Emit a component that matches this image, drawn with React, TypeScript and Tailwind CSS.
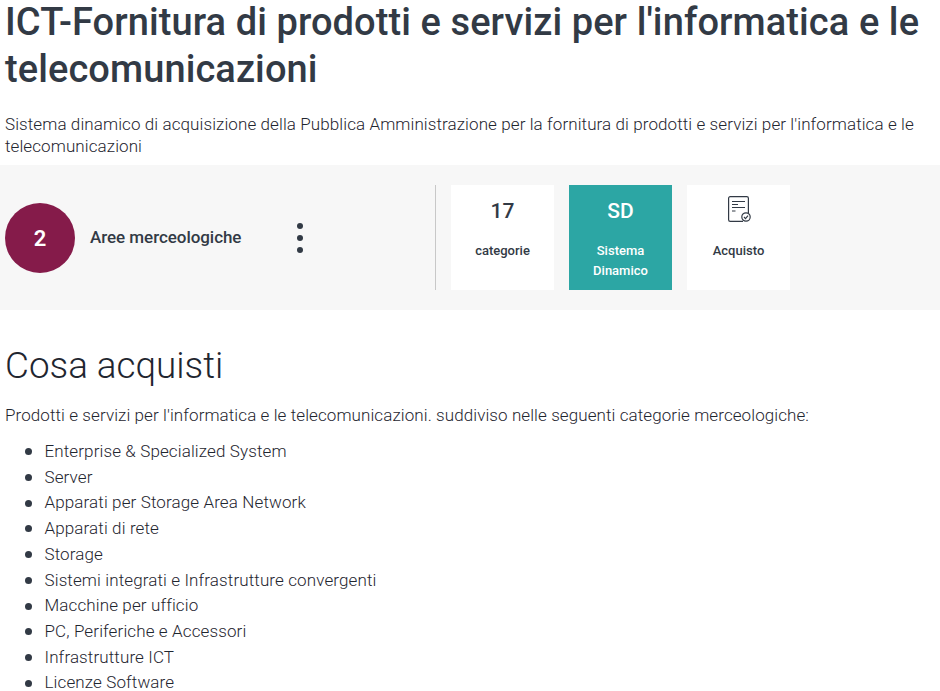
const items = [
  "Enterprise & Specialized System",
  "Server",
  "Apparati per Storage Area Network",
  "Apparati di rete",
  "Storage",
  "Sistemi integrati e Infrastrutture convergenti",
  "Macchine per ufficio",
  "PC, Periferiche e Accessori",
  "Infrastrutture ICT",
  "Licenze Software",
];

function Card({ top, label, active }: { top: React.ReactNode; label: React.ReactNode; active?: boolean }) {
  return (
    <div className={`flex h-[105px] w-[103px] flex-col items-center text-center ${active ? "bg-[#2ca6a4] text-white" : "bg-white text-[#323a45]"}`}>
      <div className="flex h-[52px] items-center justify-center pt-[2px] text-[21px] font-medium">{top}</div>
      <div className="mt-[4px] text-[13px] leading-[20px] font-medium">{label}</div>
    </div>
  );
}

export default function App() {
  return (
    <div className="h-[691px] w-[940px] overflow-hidden bg-white text-[#323a45] font-['Roboto',sans-serif]">
      <h1 className="-mt-[1px] pl-[5px] text-[38px] leading-[47px] font-medium tracking-[0.09px]">
        ICT-Fornitura di prodotti e servizi per l'informatica e le telecomunicazioni
      </h1>
      <p className="mt-[20px] pl-[5px] pr-[20px] text-[17px] leading-[22px] font-light tracking-[0.095px] text-[#1f2630]">
        Sistema dinamico di acquisizione della Pubblica Amministrazione per la fornitura di prodotti e servizi per l'informatica e le telecomunicazioni
      </p>
      <div className="mt-[8px] flex h-[145px] items-center bg-[#f7f7f7] pl-[5px]">
        <div className="flex h-[70px] w-[70px] items-center justify-center rounded-full bg-[#851b4a] pt-[2px] text-[22px] font-semibold text-white">2</div>
        <div className="ml-[15px] w-[207px] pt-[1px] text-[17px] font-medium tracking-[-0.05px]">Aree merceologiche</div>
        <div className="flex flex-col gap-[6px]">
          <span className="h-[6px] w-[6px] rounded-full bg-[#323a45]" />
          <span className="h-[6px] w-[6px] rounded-full bg-[#323a45]" />
          <span className="h-[6px] w-[6px] rounded-full bg-[#323a45]" />
        </div>
        <div className="ml-[132px] flex h-[105px] gap-[15px] border-l border-[#c8c8c8] pl-[15px]">
          <Card top="17" label="categorie" />
          <Card top="SD" label={<>Sistema<br />Dinamico</>} active />
          <Card
            top={
              <svg width="24" height="27" viewBox="0 0 24 27" fill="none" stroke="#323a45" strokeWidth="1.2" className="-mt-[5px]">
                <path d="M16 25.400H3.200A1.600 1.600 0 0 1 1.600 23.800V2.200A1.600 1.600 0 0 1 3.200 0.600H19.800A1.600 1.600 0 0 1 21.400 2.200V17" />
                <path d="M5 5.500H18M5 8.500H11M5 11.500H18M5 15H8.500" />
                <circle cx="19" cy="21" r="4.200" />
                <path d="M17 21L18.500 22.600L21 19.600" />
              </svg>
            }
            label="Acquisto"
          />
        </div>
      </div>
      <h2 className="mt-[32px] pl-[5px] text-[36.8px] leading-[48px] font-light text-[#1f2630]">Cosa acquisti</h2>
      <p className="mt-[12px] pl-[5px] text-[17px] leading-[26px] font-light tracking-[0.09px] text-[#1f2630]">
        Prodotti e servizi per l'informatica e le telecomunicazioni. suddiviso nelle seguenti categorie merceologiche:
      </p>
      <ul className="mt-[11px] pl-[25px] text-[17px] leading-[25.71px] font-light tracking-[0.12px] text-[#1f2630]">
        {items.map((t) => (
          <li key={t} className="flex items-center">
            <span className="mr-[12.5px] h-[7px] w-[7px] shrink-0 rounded-full bg-[#323a45]" />
            {t}
          </li>
        ))}
      </ul>
    </div>
  );
}
